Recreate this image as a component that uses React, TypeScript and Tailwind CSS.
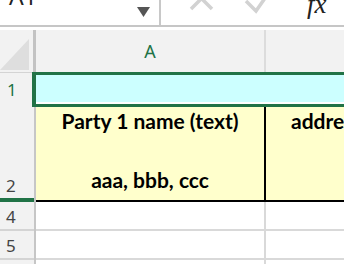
import React from "react";

const ui = { fontFamily: '"Noto Sans", "Open Sans", sans-serif' };
const cellFont = { fontFamily: 'Lato, "Open Sans", sans-serif' };

export default function App() {
  return (
    <div className="w-[344px] h-[264px] overflow-hidden bg-white flex flex-col">
      {/* Formula bar */}
      <div className="h-[27px] shrink-0 flex border-b-2 border-[#c6c6c6]">
        <div className="w-[159px] shrink-0 relative overflow-hidden">
          <span className="absolute left-[9px] top-[-15px] text-[23px] leading-none text-[#222]" style={ui}>A1</span>
          <svg className="absolute left-[137px] top-[7px]" width="13" height="10" viewBox="0 0 13 10">
            <polygon points="0,0 13,0 6.5,10" fill="#555" />
          </svg>
        </div>
        <div className="w-[2px] shrink-0 bg-[#c8c8c8]" />
        <div className="flex-1 relative overflow-hidden">
          <svg className="absolute left-[28px] top-[-14px]" width="25" height="25" viewBox="0 0 25 25">
            <path d="M2 2 L23 23 M23 2 L2 23" stroke="#d2d2d2" strokeWidth="3.5" fill="none" />
          </svg>
          <svg className="absolute left-[83px] top-[-11px]" width="28" height="25" viewBox="0 0 28 25">
            <path d="M2 12 L12 22 L26 2" stroke="#d2d2d2" strokeWidth="3.5" fill="none" />
          </svg>
          <span className="absolute left-[146px] top-[-9px] text-[27px] leading-none italic text-[#222]" style={{ fontFamily: '"Liberation Serif", "DejaVu Serif", serif' }}>fx</span>
        </div>
      </div>
      <div className="h-[3px] shrink-0" />
      {/* Column header */}
      <div className="h-[42px] shrink-0 flex bg-[#f2f2f2]">
        <div className="w-[33px] shrink-0 flex flex-col">
          <div className="h-[9px]" />
          <svg width="30" height="31" viewBox="0 0 30 31">
            <polygon points="0,31 29,31 29,0" fill="#dedede" />
          </svg>
        </div>
        <div className="w-[3px] shrink-0 bg-[#c3c3c3]" />
        <div className="w-[228px] shrink-0 flex items-center justify-center text-[18px] text-[#217346]" style={ui}>A</div>
        <div className="w-[2px] shrink-0 bg-[#dcdcdc]" />
        <div className="flex-1" />
      </div>
      {/* Row 1 */}
      <div className="h-[35px] shrink-0 flex">
        <div className="w-[32px] shrink-0 bg-[#f2f2f2] border-t border-[#d4d4d4] flex items-center pl-[7px] text-[17px] text-[#217346]" style={ui}>1</div>
        <div className="flex-1 border-l-[4px] border-t-[3px] border-b-[3px] border-[#217346] flex flex-col">
          <div className="flex-1 bg-[#ccffff]" />
          <div className="h-[2px] bg-white" />
        </div>
      </div>
      {/* Row 2 */}
      <div className="h-[95px] shrink-0 flex">
        <div className="w-[34px] shrink-0 bg-[#f2f2f2] flex flex-col">
          <div className="flex-1 flex items-end pl-[6px] pb-[4px] text-[17px] leading-none text-[#444]" style={ui}>2</div>
          <div className="h-[4px] bg-[#217346]" />
        </div>
        <div className="w-[2px] shrink-0 bg-[#c6c6c6]" />
        <div className="flex-1 flex flex-col">
          <div className="flex-1 flex bg-[#ffffcc]" style={cellFont}>
            <div className="w-[228px] shrink-0 flex flex-col items-center justify-between pt-[2px] pb-[8px] font-bold text-[21px] leading-[24px] text-black">
              <span className="whitespace-nowrap">Party 1 name (text)</span>
              <span className="whitespace-nowrap">aaa, bbb, ccc</span>
            </div>
            <div className="w-[2px] shrink-0 bg-black" />
            <div className="flex-1 overflow-hidden pt-[2px] pl-[25px] whitespace-nowrap font-bold text-[21px] leading-[24px] text-black">address</div>
          </div>
          <div className="h-[2px] bg-black" />
        </div>
      </div>
      {/* Rows 4, 5, 6 */}
      {["4", "5", "6"].map((n) => (
        <div key={n} className="h-[29px] shrink-0 flex">
          <div className="w-[34px] shrink-0 bg-[#f2f2f2] flex flex-col">
            <div className="flex-1 flex items-end pl-[6px] pb-[4px] text-[17px] leading-none text-[#444]" style={ui}>{n}</div>
            <div className="h-[2px] bg-[#d4d4d4]" />
          </div>
          <div className="w-[2px] shrink-0 bg-[#c6c6c6]" />
          <div className="flex-1 flex flex-col">
            <div className="flex-1 flex">
              <div className="w-[228px] shrink-0" />
              <div className="w-[2px] shrink-0 bg-[#d9d9d9]" />
              <div className="flex-1" />
            </div>
            <div className="h-[2px] bg-[#d9d9d9]" />
          </div>
        </div>
      ))}
    </div>
  );
}
